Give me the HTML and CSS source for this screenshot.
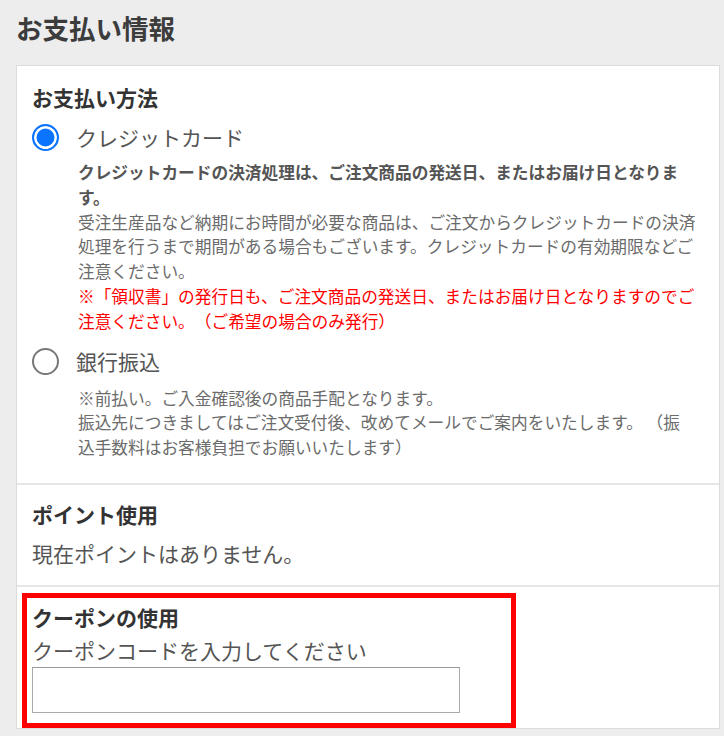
FILE: index.html
```html
<!DOCTYPE html>
<html lang="ja">
<head>
    <meta charset="UTF-8">
    <meta name="viewport" content="width=device-width, initial-scale=1.0">
    <title>お支払い情報</title>
    <link rel="stylesheet" href="styles.css">
</head>
<body>
    <div class="page">
        <h1 class="page-title">お支払い情報</h1>
        <div class="payment-card">
            <section class="card-section method-section">
                <h2 class="section-title">お支払い方法</h2>
                <label class="option">
                    <input type="radio" name="payment" value="credit" checked>
                    <span class="option-name">クレジットカード</span>
                </label>
                <div class="option-note">
                    <p class="note-strong">クレジットカードの決済処理は、ご注文商品の発送日、またはお届け日となります。</p>
                    <p>受注生産品など納期にお時間が必要な商品は、ご注文からクレジットカードの決済処理を行うまで期間がある場合もございます。クレジットカードの有効期限などご注意ください。</p>
                    <p class="note-alert">※「領収書」の発行日も、ご注文商品の発送日、またはお届け日となりますのでご注意ください。（ご希望の場合のみ発行）</p>
                </div>
                <label class="option option-bank">
                    <input type="radio" name="payment" value="bank">
                    <span class="option-name">銀行振込</span>
                </label>
                <div class="option-note note-bank">
                    <p>※前払い。ご入金確認後の商品手配となります。</p>
                    <p>振込先につきましてはご注文受付後、改めてメールでご案内をいたします。 （振込手数料はお客様負担でお願いいたします）</p>
                </div>
            </section>

            <section class="card-section points-section">
                <h2 class="section-title">ポイント使用</h2>
                <p class="points-text">現在ポイントはありません。</p>
            </section>

            <section class="card-section coupon-section">
                <div class="coupon-box">
                    <h2 class="section-title">クーポンの使用</h2>
                    <label for="coupon" class="coupon-label">クーポンコードを入力してください</label>
                    <input type="text" id="coupon" class="coupon-input">
                </div>
            </section>
        </div>
    </div>
</body>
</html>
```

FILE: styles.css
```css
body {
    margin: 0;
    background: #ededed;
    font-family: "Noto Sans CJK JP", sans-serif;
    color: #555;
    text-spacing-trim: space-all;
}

.page {
    padding: 10px 4px 0 16px;
}

.page-title {
    margin: 0 0 19px;
    font-size: 26.5px;
    line-height: 36px;
    font-weight: bold;
    color: #3c3c3c;
}

.payment-card {
    background: #fff;
    border: 1px solid #dcdcdc;
}

.card-section {
    padding: 16px 15px 23px;
}

.card-section + .card-section {
    border-top: 2px solid #e6e6e6;
}

.section-title {
    margin: 0;
    font-size: 21px;
    line-height: 30px;
    font-weight: bold;
    color: #333;
}

.option {
    display: flex;
    align-items: center;
    height: 32px;
    margin-top: 9px;
    cursor: pointer;
}

.option input {
    appearance: none;
    box-sizing: border-box;
    width: 27px;
    height: 27px;
    margin: 1px 0 0;
    border: 2px solid #777;
    border-radius: 50%;
    background: #fff;
}

.option input:checked {
    border-color: #0a74ff;
    background: #0a74ff;
    box-shadow: inset 0 0 0 2.5px #fff;
}

.option-name {
    margin-left: 17px;
    font-size: 21px;
    line-height: 32px;
    color: #555;
}

.option-bank {
    margin-top: 11px;
}

.option-note {
    width: 618px;
    margin: 7px 0 0 46px;
    font-size: 16.7px;
    line-height: 24.8px;
    color: #6b6b6b;
}

.note-bank {
    margin-top: 9px;
}

.option-note p {
    margin: 0;
}

.option-note .note-strong {
    font-weight: bold;
    color: #555;
}

.option-note .note-alert {
    color: #f00;
}

.points-section {
    padding-top: 14px;
    padding-bottom: 17px;
}

.points-text {
    margin: 9px 0 0;
    font-size: 21px;
    line-height: 30px;
    color: #555;
}

.coupon-section {
    padding: 6px 0 0 5px;
}

.coupon-box {
    box-sizing: border-box;
    width: 494px;
    padding: 4px 5px 10px;
    border: 5px solid #f00;
}

.coupon-label {
    display: block;
    margin-top: 4px;
    font-size: 21px;
    line-height: 28px;
    color: #555;
}

.coupon-input {
    display: block;
    box-sizing: border-box;
    width: 428px;
    height: 46px;
    margin-top: 3px;
    border: 1px solid #aaa;
    border-top-color: #999;
    background: #fff;
    font-size: 18px;
    outline: none;
}
```
